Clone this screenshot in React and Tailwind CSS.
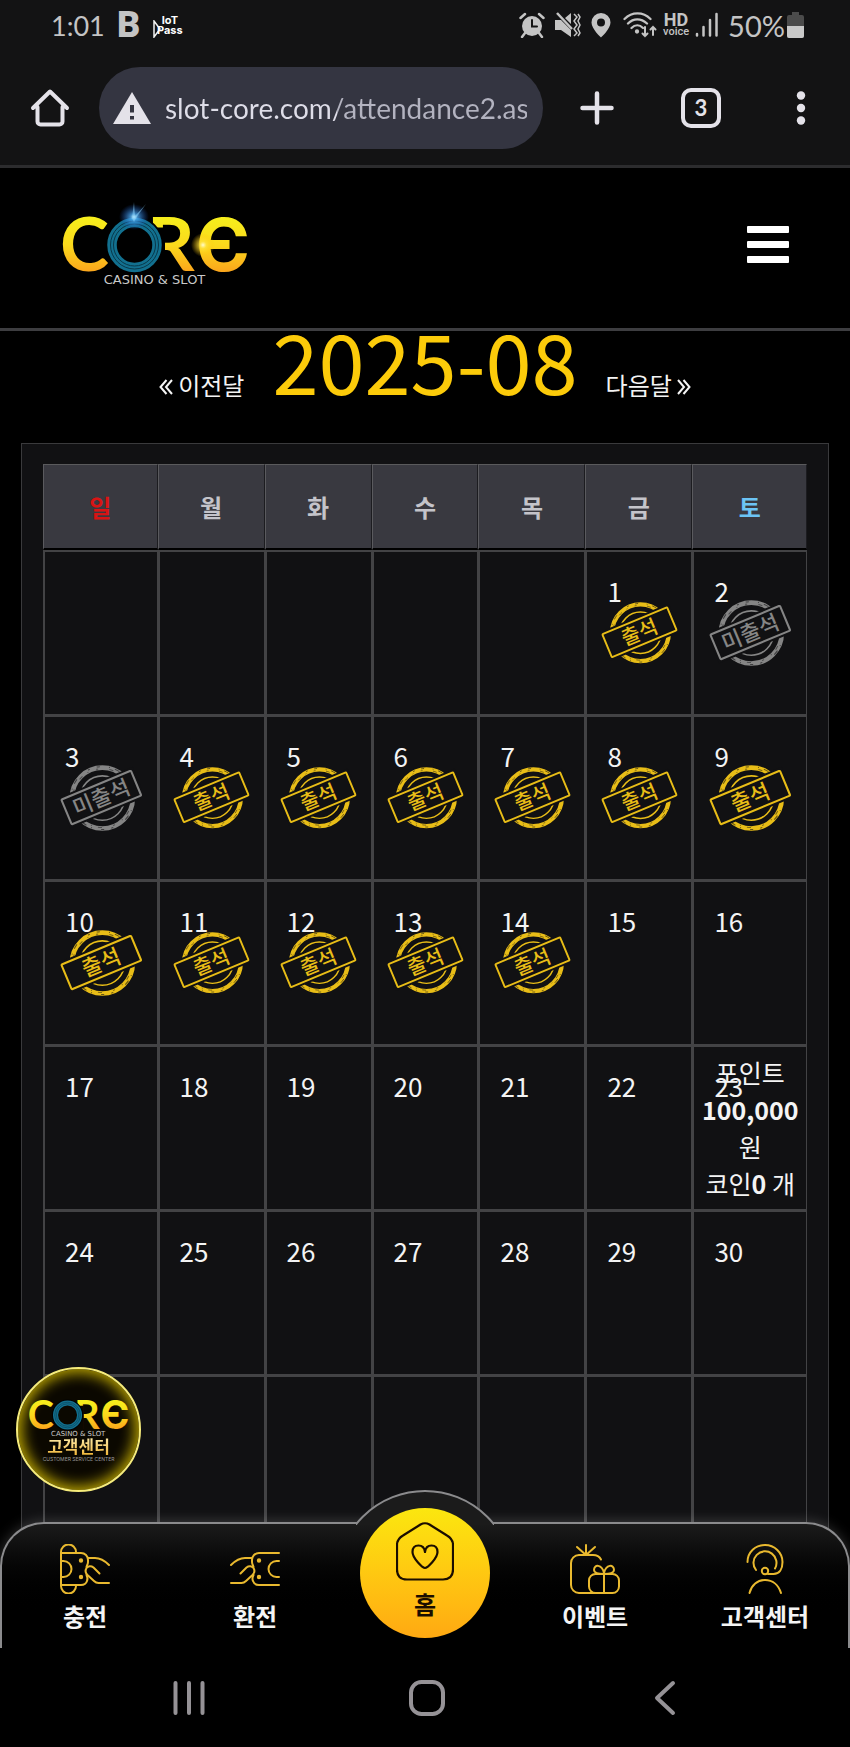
import React from "react";

const weekdays = ["일", "월", "화", "수", "목", "금", "토"];

const attendance = {
  1: "출석", 2: "미출석", 3: "미출석", 4: "출석", 5: "출석", 6: "출석", 7: "출석",
  8: "출석", 9: "출석", 10: "출석", 11: "출석", 12: "출석", 13: "출석", 14: "출석",
};

const weeks = Array.from({ length: 6 }, (_, w) =>
  Array.from({ length: 7 }, (_, d) => {
    const day = w * 7 + d - 4;
    return day >= 1 && day <= 30 ? day : null;
  })
);

function Logo({ id, className, flare }) {
  const gold = `url(#${id}-gold)`;
  return (
    <svg viewBox="-10 -14 204 88" className={className} role="img" aria-label="CORE CASINO & SLOT">
      <defs>
        <linearGradient id={`${id}-gold`} gradientUnits="userSpaceOnUse" x1="0" y1="4" x2="0" y2="58">
          <stop offset="0" stopColor="#f6ee1c" />
          <stop offset="0.5" stopColor="#fbd91c" />
          <stop offset="1" stopColor="#fba51c" />
        </linearGradient>
        <radialGradient id={`${id}-blue`}>
          <stop offset="0" stopColor="#c8f4ff" />
          <stop offset="0.25" stopColor="#4aa8f0" stopOpacity="0.8" />
          <stop offset="1" stopColor="#1450c0" stopOpacity="0" />
        </radialGradient>
        <radialGradient id={`${id}-spark`}>
          <stop offset="0" stopColor="#fffbd0" />
          <stop offset="0.3" stopColor="#ffe23a" stopOpacity="0.8" />
          <stop offset="1" stopColor="#ffc400" stopOpacity="0" />
        </radialGradient>
        <clipPath id={`${id}-r`}>
          <path d="M80 0H140V62H102V13.500H80Z" />
        </clipPath>
      </defs>
      <g fontFamily="Lato, sans-serif" fontWeight="700" fontSize="74" fill={gold}>
        <text x="-3" y="57">C</text>
        <text x="84" y="57" clipPath={`url(#${id}-r)`}>R</text>
        <text x="133" y="57" fontFamily="Inter, sans-serif" fontSize="73">Є</text>
      </g>
      <circle cx="71.500" cy="31" r="24" fill="none" stroke="#000" strokeWidth="10" />
      <circle cx="71.500" cy="31" r="22.500" fill="none" stroke="#12708f" strokeWidth="9.500" />
      <circle cx="71.500" cy="31" r="24" fill="none" stroke="#08384a" strokeWidth="1" />
      <circle cx="71.500" cy="31" r="21" fill="none" stroke="#08384a" strokeWidth="1" />
      {flare && (
        <g>
          <ellipse cx="71" cy="3" rx="15" ry="13" fill={`url(#${id}-blue)`} />
          <path d="M71 -12L72 2L83 -10L73 4L71 8L69 4Z" fill="#8fd8ff" opacity="0.5" />
          <circle cx="140" cy="31" r="12" fill={`url(#${id}-spark)`} />
        </g>
      )}
      <text x="91.500" y="70" textAnchor="middle" fontFamily="'DejaVu Sans', sans-serif" fontSize="13" fill="#c9c9c9">
        CASINO &amp; SLOT
      </text>
    </svg>
  );
}

function Stamp({ label }) {
  const color = label === "출석" ? "#e8bd17" : "#858585";
  return (
    <svg viewBox="0 0 80 66" className="mx-auto block w-[74%]" role="img" aria-label={label}>
      <g fill="none" stroke={color}>
        <circle cx="41" cy="33" r="29.500" strokeWidth="4.500" />
        <circle cx="41" cy="33" r="21.500" strokeWidth="1.500" />
      </g>
      <circle cx="41" cy="33" r="30.500" fill="none" stroke="#111113" strokeWidth="1" strokeDasharray="3 9 1 5 5 14 2 7" opacity="0.6" />
      <circle cx="41" cy="33" r="28.500" fill="none" stroke="#111113" strokeWidth="1" strokeDasharray="2 11 4 6 1 8" opacity="0.5" />
      <g transform="rotate(-22.600 40 32.500)">
        <rect x="3" y="19" width="74" height="27" fill="#111113" stroke="#111113" strokeWidth="5" />
        <rect x="3.500" y="19.500" width="73" height="26" rx="1" fill="none" stroke={color} strokeWidth="2" />
        <text x="40" y="40" textAnchor="middle" fontFamily="'Noto Sans CJK KR', sans-serif" fontWeight="500" fontSize="21" fill={color}>
          {label}
        </text>
      </g>
    </svg>
  );
}

const lineIcon = {
  fill: "none",
  stroke: "#e9b92f",
  strokeWidth: 2,
  strokeLinecap: "round",
  strokeLinejoin: "round",
};

function CardHand() {
  return (
    <>
      <path d="M1 9H21C25 9 28 12 28 16V18C28 20 27 21 26.500 23M26.500 31C28 34 28 35 27 37C26 40 24 41 21 41H1" />
      <path d="M1 17H3.500A8 8 0 0 1 3.500 33H1" />
      <circle cx="21" cy="16.500" r="1.200" fill="#e9b92f" />
      <circle cx="21" cy="33" r="1.200" fill="#e9b92f" />
      <path d="M28 14H35C41 14 45 17 49 21" />
      <path d="M39.500 29.500L33.500 23.500C31 21.500 28 22 26.500 24C25 26.500 25.500 29 27.500 31L34 37C35.500 38.500 36.500 39 38.500 39H49" />
    </>
  );
}

function DepositIcon() {
  return (
    <svg viewBox="0 0 50 50" className="size-[50px]" {...lineIcon}>
      <path d="M1 42V8A7.500 7.500 0 0 1 16 8V9M1 42A7.500 7.500 0 0 0 16 42V41" />
      <CardHand />
    </svg>
  );
}

function WithdrawIcon() {
  return (
    <svg viewBox="0 0 50 50" className="size-[50px]" {...lineIcon}>
      <g transform="matrix(-1 0 0 1 50 0)">
        <CardHand />
      </g>
    </svg>
  );
}

function EventIcon() {
  return (
    <svg viewBox="0 0 50 50" className="size-[50px]" {...lineIcon}>
      <path d="M31 15.500C29.500 12.500 27 11 23 11H9A8 8 0 0 0 1 19V41A8 8 0 0 0 9 49H25" />
      <path d="M16 1V11L7 3M16 11L25 3" />
      <rect x="19" y="30" width="30" height="19" rx="6.500" />
      <path d="M34 49V30C30 30 24 30 24 26C24 20 32 20 34 29C36 20 44 20 44 26C44 30 38 30 34 30" />
    </svg>
  );
}

function SupportIcon() {
  return (
    <svg viewBox="0 0 50 50" className="size-[50px]" {...lineIcon}>
      <g transform="translate(6.500 0)">
        <path d="M1 18C1 8 9 1 18.500 1C28 1 36 8.500 36 18C36 25 33 30 27 30H21.500" />
        <circle cx="18.500" cy="27" r="3.200" />
        <path d="M9.500 26A11.500 11.500 0 1 1 28.500 24.500" />
        <path d="M3 49C5 41 11 36 18.500 36S32 41 34.500 49" />
      </g>
    </svg>
  );
}

function StatusBar() {
  return (
    <div className="flex h-[50px] items-center justify-between pl-[51px] pr-[46px] text-[#c4c4c4]">
      <div className="flex items-center">
        <span className="w-[66px] font-[Lato] text-[27px] leading-none">1:01</span>
        <span className="w-9 font-[Roboto] text-[36px] font-black leading-none">B</span>
        <svg viewBox="0 0 8 18" className="mt-2 h-[18px] w-2" fill="none" stroke="#f2f2f2" strokeWidth="1.500">
          <path d="M1 1L7 9L1 17Z" />
        </svg>
        <span className="-ml-1 flex flex-col items-center font-[Inter] text-[11px] font-bold leading-[10px] text-white">
          <span>IoT</span>
          <span>Pass</span>
        </span>
      </div>
      <div className="flex items-center">
        <svg viewBox="0 0 26 26" className="mr-[10px] size-[26px]" fill="none" stroke="currentColor" strokeWidth="2.500" strokeLinecap="round">
          <circle cx="13" cy="14" r="10" fill="currentColor" stroke="none" />
          <path d="M1.500 6L6 2M24.500 6L20 2M6 21L3 25M20 21L23 25" />
          <path d="M13 8V14.500H18" stroke="#131313" strokeWidth="2" />
        </svg>
        <svg viewBox="0 0 26 26" className="mr-[10px] size-[26px]">
          <path d="M0 8H6L16 18V25L6 18H0Z M16 1V12L10 6Z" fill="currentColor" />
          <path d="M2 1L17 17" stroke="currentColor" strokeWidth="2.500" />
          <path d="M19 2L22 5L19 9L22 13L19 17L22 21L19 24M23 2L25 5L23 9L25 13L23 17L25 21L23 24" fill="none" stroke="currentColor" strokeWidth="1.500" />
        </svg>
        <svg viewBox="0 0 20 26" className="mr-3 h-[26px] w-5" fill="currentColor">
          <path fillRule="evenodd" d="M10 1A9.500 9.500 0 0 0 .5 10.500C.5 17 10 25.500 10 25.500S19.500 17 19.500 10.500A9.500 9.500 0 0 0 10 1ZM10 6.500A4 4 0 1 1 10 14.500A4 4 0 0 1 10 6.500Z" />
        </svg>
        <svg viewBox="0 0 34 26" className="mr-[6px] h-[26px] w-[34px]" fill="none" stroke="currentColor" strokeWidth="2.300" strokeLinecap="round">
          <path d="M1.500 7C9 -.5 20 -.5 27.500 7M5 11.500C10.500 6 18 6 24 11.500M8.500 16C12 12.500 16.500 12.500 20 16" />
          <circle cx="14" cy="19.500" r="1" fill="currentColor" />
          <path d="M22 15V24M19.500 21.500L22 24L24.500 21.500M30 23V15M27.500 17.500L30 15L32.500 17.500" strokeWidth="2" />
        </svg>
        <span className="mr-[6px] flex flex-col items-center font-[Roboto]">
          <span className="text-[18px] font-bold leading-[14px]">HD</span>
          <span className="text-[11px] font-medium leading-[10px]">voice</span>
        </span>
        <svg viewBox="0 0 24 26" className="mr-[9px] h-[26px] w-6" stroke="currentColor" strokeWidth="2.500" strokeLinecap="round">
          <path d="M2 22V23.500M8.500 15V23.500M15 8V23.500M21.500 2V23.500" />
        </svg>
        <span className="mr-[2px] font-[Lato] text-[29px] leading-none">50%</span>
        <svg viewBox="0 0 17 26" className="h-[26px] w-[17px]">
          <path d="M5 0H12V3H15A2 2 0 0 1 17 5V24A2 2 0 0 1 15 26H2A2 2 0 0 1 0 24V5A2 2 0 0 1 2 3H5Z" fill="#4b4b4b" />
          <path d="M0 14H17V24A2 2 0 0 1 15 26H2A2 2 0 0 1 0 24Z" fill="#c9c9c9" />
        </svg>
      </div>
    </div>
  );
}

function BrowserBar() {
  return (
    <div className="flex h-[118px] items-center border-b-[3px] border-[#2c2c2e] pl-[30px] pr-[29px] text-[#e4e2e9]">
      <button type="button" aria-label="Home" className="shrink-0">
        <svg viewBox="0 0 40 40" className="size-10" fill="none" stroke="currentColor" strokeWidth="4" strokeLinecap="round" strokeLinejoin="round">
          <path d="M3 20L20 3.500L37 20M7.500 19V33.500A3 3 0 0 0 10.500 36.500H29.500A3 3 0 0 0 32.500 33.500V19" />
        </svg>
      </button>
      <div className="ml-[29px] mr-[34px] flex h-[82px] min-w-0 flex-1 items-center rounded-full bg-[#343541] pl-[14px] pr-4">
        <svg viewBox="0 0 38 32" className="h-8 w-[38px] shrink-0">
          <path d="M19 0L38 32H0Z" fill="#e4e2e9" />
          <path d="M19 13V20.500M19 24V27.500" stroke="#343541" strokeWidth="4" />
        </svg>
        <input
          type="text"
          aria-label="Address"
          readOnly
          value="slot-core.com/attendance2.asp"
          className="ml-[14px] h-12 w-full min-w-0 bg-[linear-gradient(90deg,#dedde8_172px,#b3b3c0_172px)] bg-clip-text font-[Lato] text-[28px] text-transparent outline-none"
        />
      </div>
      <div className="flex shrink-0 items-center">
        <button type="button" aria-label="New tab" className="mr-16">
          <svg viewBox="0 0 40 40" className="size-10" stroke="currentColor" strokeWidth="4.500" strokeLinecap="round">
            <path d="M20 5.500V34.500M5.500 20H34.500" />
          </svg>
        </button>
        <button type="button" aria-label="Tabs" className="mr-[60px] flex size-10 items-center justify-center rounded-[10px] border-4 border-current font-[Lato] text-[22px] font-bold leading-none">
          3
        </button>
        <button type="button" aria-label="More">
          <svg viewBox="0 0 40 40" className="size-10" fill="currentColor">
            <circle cx="20" cy="7.500" r="4.200" />
            <circle cx="20" cy="20" r="4.200" />
            <circle cx="20" cy="32.500" r="4.200" />
          </svg>
        </button>
      </div>
    </div>
  );
}

function Chevrons({ direction }) {
  return (
    <svg viewBox="0 0 14 16" className="inline-block h-4 w-[14px] align-baseline" fill="none" stroke="currentColor" strokeWidth="2">
      {direction === "prev" ? (
        <path d="M7.500 1L1.500 8L7.500 15M13 1L7 8L13 15" />
      ) : (
        <path d="M6.500 1L12.500 8L6.500 15M1 1L7 8L1 15" />
      )}
    </svg>
  );
}

function Calendar() {
  return (
    <section className="mx-[21px] border border-[#3a3a3c] bg-[#111113] px-[21px] py-5">
      <table className="w-full table-fixed border-separate border-spacing-0">
        <colgroup>
          <col className="w-[15%]" />
          <col />
          <col />
          <col />
          <col />
          <col />
          <col className="w-[15%]" />
        </colgroup>
        <thead>
          <tr>
            {weekdays.map((name) => (
              <th
                key={name}
                scope="col"
                className="h-[86px] border-b-2 border-l border-r border-t border-b-black border-l-[#5a5a5e] border-r-[#1c1c20] border-t-[#5a5a5c] bg-[#393940] text-2xl font-bold text-[#c4c4ca] first:text-[#d81414] last:text-[#6cc4f5]"
              >
                {name}
              </th>
            ))}
          </tr>
        </thead>
        <tbody>
          {weeks.map((days, w) => (
            <tr key={w}>
              {days.map((day, d) => (
                <td
                  key={d}
                  className="relative h-[165px] border-b border-l-2 border-r border-t-2 border-[#434345] p-0 text-center align-middle text-[25px] leading-[37px]"
                >
                  {day && <span className="absolute left-5 top-5 text-[26px]">{day}</span>}
                  {attendance[day] && <Stamp label={attendance[day]} />}
                  {day === 23 && (
                    <div>
                      <div>포인트</div>
                      <div className="font-bold">100,000</div>
                      <div>원</div>
                      <div>
                        코인<b>0</b> 개
                      </div>
                    </div>
                  )}
                </td>
              ))}
            </tr>
          ))}
        </tbody>
      </table>
    </section>
  );
}

function NavItem({ icon, label }) {
  return (
    <a href={`#${label}`} className="flex flex-col items-center gap-1 pt-5">
      {icon}
      <span className="text-2xl font-bold leading-9">{label}</span>
    </a>
  );
}

function BottomNav() {
  return (
    <nav className="relative h-[126px] rounded-t-[44px] border-x-2 border-t-2 border-[#8b8b8d] bg-gradient-to-b from-[#1b1b1b] to-black to-75% shadow-[0_0_14px_rgba(255,255,255,0.2)]">
      <div className="absolute -top-[34px] left-1/2 h-[35px] w-[138px] -translate-x-1/2 overflow-hidden">
        <div className="-ml-5 size-[178px] rounded-full border-2 border-[#8b8b8d] bg-[#1b1b1b]" />
      </div>
      <div className="relative -mx-[2px] grid grid-cols-5">
        <NavItem icon={<DepositIcon />} label="충전" />
        <NavItem icon={<WithdrawIcon />} label="환전" />
        <a
          href="#home"
          className="-mt-4 flex size-[130px] flex-col items-center justify-self-center rounded-full bg-gradient-to-b from-[#fbe70f] to-[#ffa912] pt-[14px] text-[#1a0d00]"
        >
          <svg viewBox="0 0 58 59" className="h-[59px] w-[58px]" fill="none" stroke="currentColor" strokeWidth="2.200" strokeLinejoin="round">
            <path d="M24.500 2.500Q29 0 33.500 2.500L51 13.500Q57 17 57 23V47.500Q57 57.500 47 57.500H11Q1 57.500 1 47.500V23Q1 17 7 13.500Z" />
            <path d="M29 46C27 46 16.500 36.500 16.500 30C16.500 25.500 19 23.500 22.500 23.500C26 23.500 28.500 26 29 30C29.500 26 32 23.500 35.500 23.500C39 23.500 41.500 25.500 41.500 30C41.500 36.500 31 46 29 46Z" />
          </svg>
          <span className="mt-[5px] text-2xl font-bold leading-9">홈</span>
        </a>
        <NavItem icon={<EventIcon />} label="이벤트" />
        <NavItem icon={<SupportIcon />} label="고객센터" />
      </div>
    </nav>
  );
}

function SupportBadge() {
  return (
    <a
      href="#support"
      className="absolute bottom-[255px] left-4 z-10 flex size-[125px] flex-col items-center rounded-full border-2 border-[#f6ec7c] bg-[#0b0800] pt-[22px] shadow-[inset_0_0_14px_4px_#b8a200]"
    >
      <Logo id="badge" className="w-[109px]" />
      <span className="-mt-[2px] bg-gradient-to-b from-[#fff0b0] to-[#f0b429] bg-clip-text text-[17px] font-bold leading-5 text-transparent">
        고객센터
      </span>
      <span className="font-[Inter] text-[5px] leading-[6px] text-[#9a9a9a]">CUSTOMER SERVICE CENTER</span>
    </a>
  );
}

function SystemBar() {
  return (
    <div className="relative flex h-[99px] items-center justify-between bg-black pl-[171px] pr-[167px] text-[#959296]">
      <button type="button" aria-label="Recent apps">
        <svg viewBox="0 0 36 36" className="size-9" stroke="currentColor" strokeWidth="4" strokeLinecap="round">
          <path d="M4.500 3V33M18 3V33M31.500 3V33" />
        </svg>
      </button>
      <button type="button" aria-label="Home screen">
        <svg viewBox="0 0 36 36" className="size-9" fill="none" stroke="currentColor" strokeWidth="4">
          <rect x="2" y="2" width="32" height="32" rx="10.500" />
        </svg>
      </button>
      <button type="button" aria-label="Back">
        <svg viewBox="0 0 36 36" className="size-9" fill="none" stroke="currentColor" strokeWidth="4" strokeLinecap="round" strokeLinejoin="round">
          <path d="M26 3L10 18L26 33" />
        </svg>
      </button>
    </div>
  );
}

export default function App() {
  return (
    <div className="relative flex h-screen flex-col overflow-hidden bg-black font-['Noto_Sans_CJK_KR',sans-serif] text-[#f4f4f4]">
      <div className="shrink-0 bg-[#131314]">
        <StatusBar />
        <BrowserBar />
      </div>
      <header className="flex h-[163px] shrink-0 items-center justify-between border-b-[3px] border-[#3d3d40] pb-2 pl-[53px] pr-[61px]">
        <a href="#top" className="block">
          <Logo id="header" className="w-[204px]" flare />
        </a>
        <button type="button" aria-label="메뉴" className="flex flex-col gap-2">
          <span className="h-[7px] w-[42px] rounded-[1px] bg-white" />
          <span className="h-[7px] w-[42px] rounded-[1px] bg-white" />
          <span className="h-[7px] w-[42px] rounded-[1px] bg-white" />
        </button>
      </header>
      <main className="min-h-0 flex-1 overflow-y-auto [scrollbar-width:none]">
        <div className="flex h-28 items-baseline justify-center gap-7">
          <a href="#prev" className="text-2xl">
            <Chevrons direction="prev" /> 이전달
          </a>
          <h1 className="text-[83px] leading-[56px] text-[#fccb0a]">2025-08</h1>
          <a href="#next" className="text-2xl">
            다음달 <Chevrons direction="next" />
          </a>
        </div>
        <Calendar />
      </main>
      <footer className="relative -mt-[126px] shrink-0">
        <BottomNav />
        <SystemBar />
      </footer>
      <SupportBadge />
    </div>
  );
}
